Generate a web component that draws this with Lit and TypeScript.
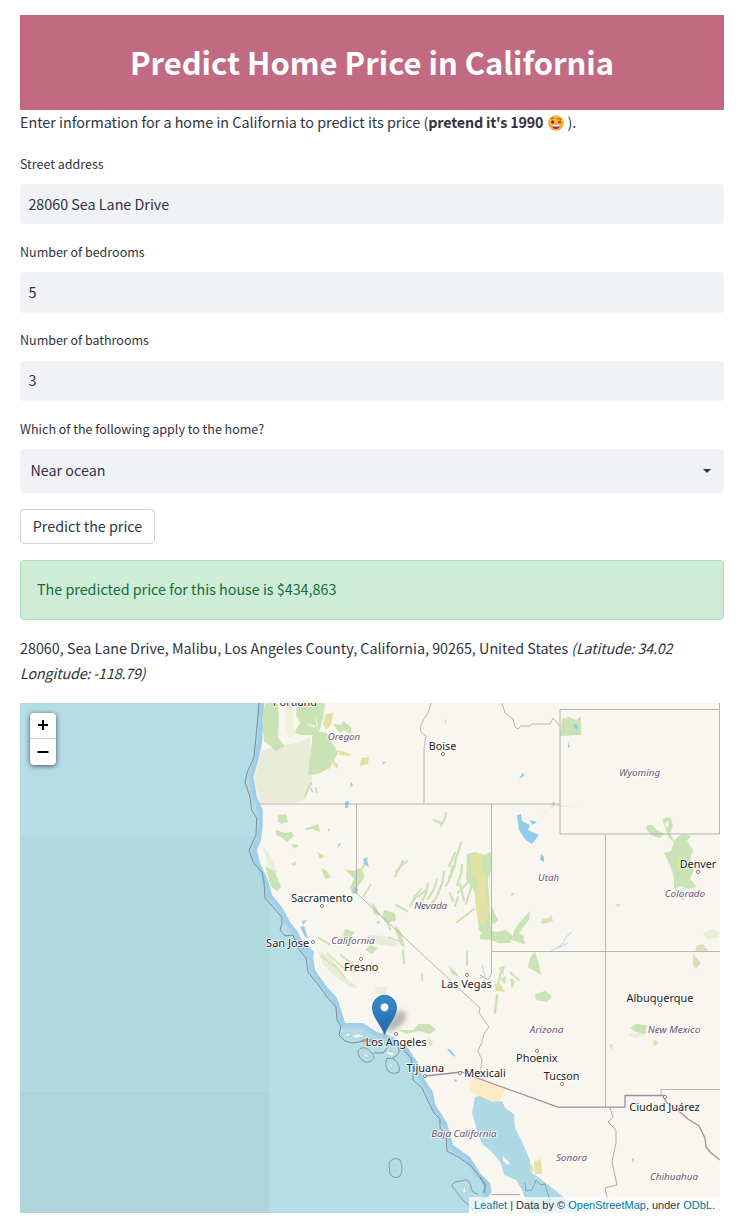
import { LitElement, html, svg, css } from "lit";
import { customElement, property, state } from "lit/decorators.js";

type Place = [name: string, x: number, y: number, width: number];
type Point = [x: number, y: number];

const CITIES: Place[] = [
  ["Portland", 295, 705.5, 44],
  ["Boise", 442.5, 750, 27.5],
  ["Denver", 698, 868, 36.5],
  ["Sacramento", 322, 902, 61.5],
  ["San Jose", 287.6, 947, 43],
  ["Fresno", 361.2, 970.7, 34.5],
  ["Las Vegas", 466.5, 987.7, 50.5],
  ["Los Angeles", 396, 1046.3, 61],
  ["Albuquerque", 660, 1001.5, 67],
  ["Phoenix", 536.8, 1062, 41.5],
  ["Tucson", 561.6, 1080, 35.5],
  ["Mexicali", 485, 1077, 41.5],
  ["Tijuana", 425.3, 1072, 37.5],
  ["Ciudad Juárez", 664.5, 1111.3, 70.5],
];

const REGIONS: Place[] = [
  ["Oregon", 344, 740, 32.5],
  ["Wyoming", 639.6, 776, 41],
  ["Utah", 548.6, 881, 21],
  ["Colorado", 685, 897, 40.5],
  ["Nevada", 430.7, 909.2, 33],
  ["California", 353, 944, 43.5],
  ["Arizona", 546.6, 1033, 33.5],
  ["New Mexico", 674, 1033, 52.5],
  ["Baja California", 464, 1137, 65.5],
  ["Sonora", 571.5, 1161, 31],
  ["Chihuahua", 674, 1179.7, 48],
];

const DOTS: Point[] = [
  [443, 754], [698, 872], [322, 906], [313, 942], [361, 959], [467, 975],
  [396, 1034], [660, 1005], [537, 1051], [562, 1084], [460, 1073], [425, 1076], [665, 1097],
];

const LAND =
  "M264 703L263.5 720 262 743 258.500 760 253.500 777 255 786 257 797 262.700 810 262.700 827 261 840 257 850 260 863 268 880 272 895 282 907 290 922 298 932 305 947 313 956 315 970 327 987 337 998 342 1013 345 1023 363 1023 377 1032 385 1034 393 1037 401 1043 408 1048 418 1063 423 1077 433 1092 435 1104 447 1123 453 1145 470 1157 480 1173 490 1183 491.500 1192 486 1200 483 1213H720V703Z";

const GULF =
  "M475 1097L472 1113 477 1130 482 1144 491 1151 501 1163 504 1175 516 1180 522 1190 527 1204 530 1213H580L570 1203 560 1194 547 1184 538 1177 530 1172 530 1160 523 1144 515 1128 514 1114 505 1108 502 1101 492 1102 480 1096Z";

const MARITIME =
  "M259 703Q258 718 256.700 730L254 757 247 773 245 782 250 797 251.700 810 256.700 818 256 835 249 850 253 862 262 872 264 882 265 898 272 906 281.700 917 282 924 280 930 285 936 293 935 298 948 306 958 308 972 320 987 327 997 336 1007 337 1020 341 1026 339 1035 345 1041 352 1043 365 1041 377 1042M400 1046L411 1058 413 1068 413 1080 422 1088 430 1105 434 1113 440 1119 440 1127 446 1136 447 1151 460 1158 470 1165 481 1178 485 1186 485 1193M361 1041Q366 1038 374 1041L381 1043M374 1053L383 1053 387 1048M398 1047Q402 1053 393 1058";

const MARITIME_RINGS =
  "M358 1051Q360 1047 366 1048Q374 1053 374 1058Q371 1063 365 1062Q358 1058 358 1051ZM387 1058Q384 1064 388 1071Q393 1075 399 1072Q401 1065 394 1059ZM389 1163Q393 1156 400 1160Q404 1169 400 1176Q394 1180 390 1174ZM452 1186Q453 1181 462 1181Q468 1177 471 1186Q471 1193 478 1194M452 1186Q457 1193 464 1201L474 1210";

const SOFT_GREEN =
  "M262 750L285 745 300 742 310 737 312 780 305 800 292 803 260 803 254 780ZM263 846L270 855 278 873 270 873ZM318 950L330 957 346 978 358 988 350 987 333 975 322 963ZM369 935L386 936 398 944 392 947 378 944ZM375 987L387 987 384 995 376 994ZM703 933L713 929 720 932 718 938 706 939ZM628 1034L640 1033 650 1030 643 1036 634 1038ZM580 808L552 804 542 818 545 811 555 806Z";

const FOREST =
  "M265 703L278 703 279 720 278 738 285 746 276 751 264 741 262 720ZM298 703L325 703 323 718 318 735 301 735 294 733 300 723 296 715ZM313 730L327 733 338 753 330 768 318 774 308 775 311 750ZM333 724L341 725 343 721 351 727 351 734 344 730 340 733ZM278 815L286 814 288 822 282 824 278 822ZM276 830L285 833 292 832 294 836 287 842 281 837 276 835ZM310 827L318 824 320 832 312 829ZM317 852L325 856 327 855 320 859ZM321 868L326 870 331 877 325 879ZM265 866L275 872 281 887 277 891 271 887ZM322 870L328 873 331 878 325 876ZM291 844L299 845 294 849ZM291 864L296 861 295 866ZM345 869L353 871 360 868 365 876 358 886 353 895 350 888 354 879ZM371 902L376 907 381 916 374 914ZM384 910L395 913 396 921 386 923 382 918ZM395 925L401 932 405 948 400 944 396 933ZM345 929L355 932 350 938 343 937ZM370 945L378 948 372 954 365 950ZM398 1030L413 1030 419 1024 430 1024 436 1030 429 1034 420 1031 406 1034ZM449 966L456 972 459 977 452 974ZM428 1038L433 1042 430 1047ZM562 719L569 717 576 720 581 716 581 735 560 736ZM647 825L652 825 657 830 665 834 659 838 651 835 646 829ZM662 819L670 817 673 825 670 834 675 843 669 838ZM675 839L682 834 691 836 687 841 693 850 690 860 696 865 690 879 697 887 688 889 682 886 674 889 674 878 670 865 664 853 671 851ZM480 935L487 930 497 932 506 930 513 936 510 943 499 943 491 940 480 939ZM491 905L498 920 493 925 491 918ZM530 911L519 923 514 931 512 940 524 944 524 936 519 933 529 920ZM535 951L539 965 541 975 528 967 530 958ZM535 994L545 991 552 996 547 1002 536 1000ZM630 1028L636 1024 647 1025 645 1034 636 1032ZM483 855L491 852 491 870 488 880 491 930 485 937 479 930 476 905 474 890 466 880 467 854 475 852ZM499 968L505 966 503 975ZM500 979L506 976 505 984ZM510 978L515 981 512 989ZM674 888L685 896 683 901Z";

const FOREST_STRIPES =
  "M415 896L413 901 410 906M421 889L417 894 414 900M428 884L426 893 421 904M437 880L434 889 428 899M444 872L442 884 437 895M452 866L451 876 446 886M456 860L454 868 449 878M462 865L461 874 457 885M418 897L425 891M403 861L400 867 395 876M407 861L402 865 396 872M439 893L436 898 430 906M450 893L453 901M460 884L464 900M458 897L455 906M468 882L458 893M472 885L466 904M474 909L457 922M396 905L407 911M384 915L390 929M446 813L445 818 441 826M434 820L442 824M461 842L459 850 455 860M455 853L449 866M497 995L495 1013M511 973L519 980M501 972L498 984M403 950L404 963M422 974V980M467 952V965M311 783L305 796M316 788L317 792M515 930L524 943M306 829L318 826M341 955L352 964M319 938L329 944M367 858L360 874";

const GOLD =
  "M361 758L369 757 368 764 360 766ZM326 714L333 713 331 725 326 730 323 723ZM337 750L352 754 349 756 340 755ZM332 760L338 764 338 769 333 765ZM471 855L483 853 481 869 487 878 485 895 490 910 484 925 478 920 475 900 478 880 471 873ZM494 984L500 983 505 992 496 991ZM534 1162L541 1159 542 1174 535 1174ZM654 1040L658 1042 656 1046 653 1045Z";

const DESERT_PATCHES =
  "M543 919L549 918 551 914 553 921 543 924 540 922ZM697 946L703 944 708 951 695 951ZM693 954L701 963 696 969 693 966ZM615 904L621 904 618 908ZM609 1044L613 1045 612 1050ZM527 1165Q531 1161 534 1169Q532 1176 527 1173Z";

const LAKES =
  "M517 815L521 814 522 821 530 825 528 830 539 835 532 844 526 840 524 838 519 830ZM530 820L537 822 532 825ZM541 854L544 857 544 862 540 860ZM523 772L519 779 524 776ZM573 724L578 725 577 732ZM553 801L555 803 553 807ZM568 742L570 747 568 748ZM345 802L349 801 348 808 345 808ZM351 782L353 785 350 788ZM311 787L314 793 311 791ZM363 859L366 858 369 867 365 865ZM354 887L358 889 357 894 353 893ZM445 719L446 720 445 725ZM383 762L386 762 382 765ZM328 829L330 830 328 831ZM376 922L380 921 379 924ZM302 921L307 920 303 925ZM300 927L304 926 308 938 305 937ZM447 1049L450 1049 456 1057 452 1055ZM453 1079L457 1080 456 1082ZM511 894L514 893 512 896ZM632 1159L634 1158 633 1163ZM339 843L341 844 337 848Z";

const STATE_LINES =
  "M260 804H560M431 703L428 713 424 719 420 727 421 732 426 736 424 748V803M356.500 804V893L480 1008M480 1008L479 1013 489 1027 484 1034 482 1042 478 1051 482 1060 481 1067 480 1075M491.500 804V974L488 980M491.500 951.500H720M605.500 834V1107M560 709.500H719.500V834H560ZM502 703L505 713 513 719 515 727 518 729 521 726 530 726 532 724 550 724 553 718 560 726M661 1095V1089.500H720M488 980L480 975M719.500 703V709";

const MEXICO_STATE_LINES =
  "M610 1108L613 1117 608 1122 616 1130 616 1143 614 1152 612 1162 617 1185 605 1188 607 1197 615 1213M491 1194.500H520";

@customElement("zoom-control")
export class ZoomControl extends LitElement {
  static styles = css`
    :host {
      display: flex;
      flex-direction: column;
      width: 26px;
      border-radius: 4px;
      background: #fff;
      box-shadow: 0 1px 5px rgba(0, 0, 0, 0.65);
    }
    .zoom {
      display: grid;
      place-items: center;
      height: 26px;
      padding: 0;
      border: 0;
      background: none;
      color: #000;
    }
    .zoom:first-child {
      border-bottom: 1px solid #ccc;
    }
    .sign {
      width: 12px;
      height: 12px;
      fill: none;
      stroke: #000;
      stroke-width: 2;
    }
  `;

  render() {
    return html`
      <button class="zoom" aria-label="Zoom in">
        <svg class="sign" viewBox="0 0 12 12"><path d="M1 6H11M6 1V11" /></svg>
      </button>
      <button class="zoom" aria-label="Zoom out">
        <svg class="sign" viewBox="0 0 12 12"><path d="M0.500 6H11.500" /></svg>
      </button>
    `;
  }
}

@customElement("home-map")
export class HomeMap extends LitElement {
  static styles = css`
    :host {
      display: block;
      position: relative;
      width: 700px;
      height: 510px;
      overflow: hidden;
    }
    .canvas {
      display: block;
      width: 700px;
      height: 510px;
    }
    .controls {
      position: absolute;
      top: 10px;
      left: 10px;
    }
    .credit {
      position: absolute;
      right: 0;
      bottom: 0;
      padding: 0 5px;
      background: rgba(255, 255, 255, 0.7);
      color: #333;
      font: 11px/16px "Liberation Sans", Arial, sans-serif;
      white-space: nowrap;
    }
    .link {
      color: #0078a8;
      text-decoration: none;
    }
    .city,
    .region {
      font-family: "Noto Sans", sans-serif;
      text-anchor: middle;
      paint-order: stroke;
      stroke: rgba(255, 255, 255, 0.75);
      stroke-width: 2px;
      stroke-linejoin: round;
    }
    .city {
      font-size: 11px;
      fill: #222;
    }
    .region {
      font-size: 9.6px;
      font-style: italic;
      fill: #6b5070;
    }
  `;

  private label(place: Place, kind: string) {
    const [name, x, y, width] = place;
    return svg`<text class=${kind} x=${x} y=${y} textLength=${width} lengthAdjust="spacingAndGlyphs">${name}</text>`;
  }

  render() {
    return html`
      <svg class="canvas" viewBox="20 703 700 510" role="img" aria-label="Map of the home location">
        <defs>
          <clipPath id="sea">
            <path clip-rule="evenodd" d="M20 703H720V1213H20Z${LAND}" />
          </clipPath>
          <filter id="soft" x="-5%" y="-5%" width="110%" height="110%">
            <feGaussianBlur stdDeviation="0.55" />
          </filter>
          <filter id="coast" x="-5%" y="-5%" width="110%" height="110%">
            <feGaussianBlur stdDeviation="1.5" />
          </filter>
          <filter id="shade" x="-50%" y="-50%" width="200%" height="200%">
            <feGaussianBlur stdDeviation="2.5" />
          </filter>
          <linearGradient id="pin" x1="0" y1="0" x2="0" y2="1">
            <stop offset="0" stop-color="#3a8ccb" />
            <stop offset="1" stop-color="#2069a8" />
          </linearGradient>
        </defs>

        <rect x="20" y="703" width="700" height="510" fill="#b5dde6" />
        <rect x="20" y="835" width="250.500" height="256" fill="#b1d9e0" />
        <rect x="20" y="1091" width="250.500" height="122" fill="#b0d6dc" />
        <path d="M20 835H262M20 1091H430M270.500 885V1213" fill="none" stroke="#bce0e8" stroke-width=".6" />

        <path d=${LAND} fill="none" stroke="#9fcfe7" stroke-width="10" filter="url(#coast)" />
        <path d=${LAND} fill="#f9f6ef" />

        <g filter="url(#soft)">
          <path d=${SOFT_GREEN} fill="#e8ecd9" />
          <path d=${FOREST} fill="#cae3b5" />
          <path d="M287 703L294 703 293 720 296 733 290 738 284 724ZM305 723L316 726 314 728ZM315 716L318 724 317 731Z" fill="#f2f1de" />
          <path
            d=${FOREST_STRIPES}
            fill="none"
            stroke="#cde1b7"
            stroke-width="2.200"
            stroke-linecap="round"
            stroke-linejoin="round"
          />
          <path d=${GOLD} fill="#e2e2a4" />
          <path d=${DESERT_PATCHES} fill="#dadfbd" />
          <path d="M321 956L337 968 346 979M327 953L347 971M371 884L363 897M388 937L403 943" fill="none" stroke="#cfe0b5" stroke-width="1.500" />
          <path d="M665 823L668 821 669 825 666 828Z" fill="#f9f6ef" />
          <path d="M469 1082L473 1078 480 1079 506 1088 500 1101 492 1103 480 1097 471 1092Z" fill="#fdebc5" />
          <path d=${GULF} fill="#add9e6" />
          <path d="M503 1156L510 1163 508 1165 503 1161Z" fill="#f9f6ef" />
          <path d="M296 934L301 940 307 955 313 960 314 952 307 944Z" fill="#a6d3e8" />
          <path d=${LAKES} fill="#93cbea" />
          <path d="M551 951L558 947 563 943 566 937 572 932M558 948L568 943M482 965L485 976 480 978" fill="none" stroke="#a9d1e5" stroke-width=".9" />
          <path d="M344 1035L350 1033 349 1036ZM351 1036L358 1034 365 1036 356 1038ZM362 1053L369 1056 366 1057ZM386 1051L394 1053 393 1056 387 1054ZM388 1062L393 1066 391 1067ZM394 1165L396 1169 395 1170ZM464 1185L466 1192 463 1193Z" fill="#f5f4ec" stroke="#9dcde6" stroke-width="1.500" paint-order="stroke" />
        </g>

        <g fill="none" stroke-linejoin="round">
          <path d=${MARITIME} stroke="#828a9b" stroke-width="1" />
          <path d=${MARITIME_RINGS} stroke="#858d9e" stroke-width=".9" />
          <path d="M525 1183L526 1191 532 1190 536 1180 541 1185 545 1184 547 1191 550 1201" stroke="#8299b2" stroke-width=".9" />
          <path d="M480 1178L486 1185 483 1193" stroke="#828a9b" stroke-width=".9" />
          <path d=${STATE_LINES} stroke="#a4a29f" stroke-width=".75" />
          <path d=${MEXICO_STATE_LINES} stroke="#a99fa4" stroke-width=".9" />
          <path
            d="M425 1076L462 1072 480 1079 558 1107.200H625V1095.500H663L667 1103 680 1112 688 1119 699 1126 705 1138 706 1147 711 1153 720 1160"
            stroke="#a48c9c"
            stroke-width="1.300"
          />
        </g>

        ${DOTS.map(
          ([x, y]) => svg`<circle cx=${x} cy=${y} r="1.600" fill="#fff" stroke="#666" stroke-width=".8" />`
        )}
        ${REGIONS.map((place) => this.label(place, "region"))}
        ${CITIES.map((place) => this.label(place, "city"))}

        <path d="M385 1034L391 1019Q399 1007 405 1012Q409 1020 397 1028Z" fill="#333" opacity=".32" filter="url(#shade)" />
        <path
          d="M384.500 1034.500C382 1026 372.500 1017 372.500 1007.500A12 12.300 0 0 1 396.500 1007.500C396.500 1017 387 1026 384.500 1034.500Z"
          fill="url(#pin)"
          stroke="#2a6fa8"
          stroke-width=".9"
        />
        <circle cx="384.500" cy="1007.300" r="4.200" fill="#fff" stroke="#2870a8" stroke-width=".5" />
      </svg>
      <zoom-control class="controls"></zoom-control>
      <div class="credit"><a class="link">Leaflet</a> | Data by © <a class="link">OpenStreetMap</a>, under <a class="link">ODbL</a>.</div>
    `;
  }
}

@customElement("text-field")
export class TextField extends LitElement {
  @property() label = "";
  @property() value = "";
  @property({ type: Boolean }) select = false;

  static styles = css`
    :host {
      display: flex;
      flex-direction: column;
      gap: 9.4px;
      color: #31333f;
    }
    .label {
      font-size: 12.5px;
      line-height: 22px;
    }
    .input {
      box-sizing: border-box;
      width: 100%;
      height: 40.4px;
      padding: 0 8.4px 2px;
      border: 0;
      border-radius: 4px;
      background: #f0f2f6;
      color: inherit;
      font: inherit;
    }
    .select {
      display: flex;
      align-items: center;
      justify-content: space-between;
      height: 43.5px;
      padding: 0 13px 0 10.5px;
      box-sizing: border-box;
      border-radius: 4px;
      background: #f0f2f6;
    }
    .value {
      padding-bottom: 2px;
    }
    .caret {
      width: 8px;
      height: 4px;
      fill: #31333f;
    }
  `;

  render() {
    return html`
      <span class="label">${this.label}</span>
      ${this.select
        ? html`<div class="select">
            <span class="value">${this.value}</span>
            <svg class="caret" viewBox="0 0 8 4"><path d="M0 0H8L4 4Z" /></svg>
          </div>`
        : html`<input class="input" aria-label=${this.label} .value=${this.value} />`}
    `;
  }
}

@customElement("app-root")
export class AppRoot extends LitElement {
  @state() private price = "$434,863";

  static styles = css`
    :host {
      display: block;
      box-sizing: border-box;
      height: 1228px;
      padding: 15px 16px 0 20px;
      background: #fff;
      color: #31333f;
      font-family: "Noto Sans CJK SC", "Noto Sans", sans-serif;
      font-size: 14.32px;
      line-height: 25.6px;
    }
    .banner {
      display: grid;
      place-items: center;
      box-sizing: border-box;
      height: 95px;
      padding-bottom: 1px;
      background: #c16a82;
    }
    .title {
      margin: 0;
      color: #fff;
      font-size: 30.95px;
      font-weight: 700;
      line-height: 44px;
      white-space: nowrap;
    }
    .intro,
    .address {
      margin: 0;
    }
    .intro {
      height: 25.6px;
      line-height: 23.6px;
      white-space: nowrap;
    }
    .strong {
      letter-spacing: -0.17px;
    }
    .emoji {
      width: 16px;
      height: 16px;
      margin: 0 3px 0 2px;
      vertical-align: -3px;
    }
    .form {
      display: flex;
      flex-direction: column;
      gap: 16.6px;
      padding-top: 17px;
    }
    .submit {
      display: block;
      box-sizing: border-box;
      width: 135px;
      height: 35px;
      margin: 16.3px 0 16px;
      padding: 0 0 2px;
      border: 1px solid #d3d4d8;
      border-radius: 4px;
      background: #fff;
      color: inherit;
      font: inherit;
    }
    .result {
      box-sizing: border-box;
      height: 60px;
      padding: 15px 16px;
      border: 1px solid #a7e0b8;
      border-radius: 4px;
      background: #ceedd8;
      color: #176b36;
    }
    .address {
      box-sizing: border-box;
      height: 83px;
      padding: 15.500px 0;
      line-height: 25px;
    }
    .coords {
      letter-spacing: -0.16px;
    }
    .map {
      display: block;
    }
  `;

  render() {
    return html`
      <header class="banner"><h1 class="title">Predict Home Price in California</h1></header>
      <p class="intro">Enter information for a home in California to predict its price (<b class="strong">pretend it's 1990 <svg class="emoji" viewBox="0 0 16 16">
          <circle cx="8" cy="8" r="7.800" fill="#fbb02d" />
          <circle cx="4.700" cy="7" r="1.500" fill="#3d2f2f" />
          <path d="M2.700 4.200Q4.200 2.500 6 3.200M9.500 4Q11.500 3 13 4.500M13 5.800L9.800 7.200 13.300 8" fill="none" stroke="#5b3a24" stroke-width=".8" />
          <path d="M3.800 10H12.200Q11.500 14 8 14T3.800 10Z" fill="#b3186d" />
          <path d="M4.200 10H11.800L11.400 11.400H4.600Z" fill="#fff" />
        </svg></b>).</p>
      <section class="form">
        <text-field label="Street address" value="28060 Sea Lane Drive"></text-field>
        <text-field label="Number of bedrooms" value="5"></text-field>
        <text-field label="Number of bathrooms" value="3"></text-field>
        <text-field label="Which of the following apply to the home?" value="Near ocean" select></text-field>
      </section>
      <button class="submit">Predict the price</button>
      <div class="result">The predicted price for this house is ${this.price}</div>
      <p class="address">28060, Sea Lane Drive, Malibu, Los Angeles County, California, 90265, United States <i class="coords">(Latitude: 34.02 Longitude: -118.79)</i></p>
      <home-map class="map"></home-map>
    `;
  }
}
